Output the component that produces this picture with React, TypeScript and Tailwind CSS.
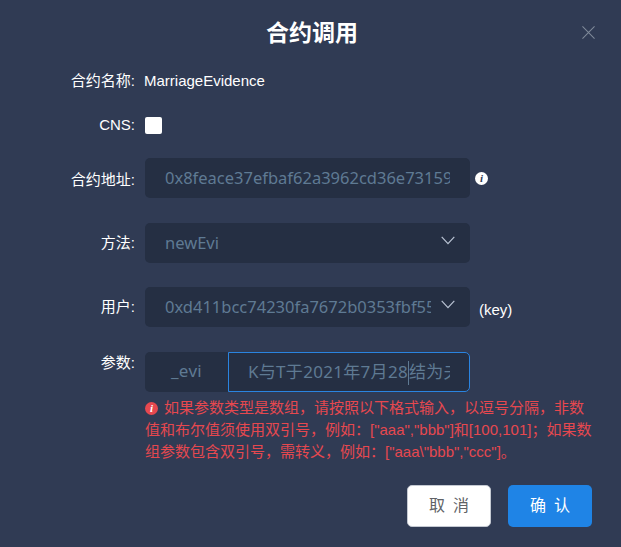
import React from 'react';

const CJK = 'font-["Liberation_Sans","Noto_Sans_CJK_SC",sans-serif]';
const FIELD = 'font-["Noto_Sans","Noto_Sans_CJK_SC",sans-serif]';

const Label: React.FC<{ text: string; className?: string }> = ({ text, className }) => (
  <div className={`w-[136px] shrink-0 pr-px text-right text-[15px] leading-5 text-white ${className ?? ''}`}>{text}</div>
);

const Chevron: React.FC = () => (
  <svg viewBox="0 0 14 9" className="absolute right-[15px] top-[13px] h-[9px] w-[14px]" fill="none" stroke="#b9c3d3" strokeWidth="1.2">
    <path d="M0.7 0.8 L7 7.6 L13.3 0.8" />
  </svg>
);

const InfoDot: React.FC<{ bg: string; fg: string; className: string }> = ({ bg, fg, className }) => (
  <span className={`h-[13px] w-[13px] shrink-0 items-center justify-center rounded-full font-["Liberation_Serif",serif] text-[11px] font-bold italic leading-none ${bg} ${fg} ${className}`}>
    i
  </span>
);

const Field: React.FC<{ text: string; select?: boolean }> = ({ text, select }) => (
  <div className={`relative h-10 w-[325px] rounded-[5px] bg-[#252f43] pl-5 text-[16.5px] leading-10 text-[#5f7a93] ${select ? 'pr-[39px]' : 'pr-5'} ${FIELD}`}>
    <div className="overflow-hidden whitespace-nowrap">{text}</div>
    {select && <Chevron />}
  </div>
);

export default function App() {
  return (
    <div className={`h-[547px] w-[621px] overflow-hidden bg-[#303b54] ${CJK}`}>
      <div className="relative pt-[19px]">
        <h2 className="pl-[3px] text-center text-[23px] font-bold leading-[28px] text-white">合约调用</h2>
        <svg viewBox="0 0 14 14" className="absolute right-[26px] top-[26px] h-[13px] w-[13px]" fill="none" stroke="#7f8a9a" strokeWidth="1.1">
          <path d="M0.5 0.5 L13.5 13.5 M13.5 0.5 L0.5 13.5" />
        </svg>
      </div>

      <div className="mt-[24px] flex h-5 items-center">
        <Label text="合约名称:" />
        <div className="ml-[8px] text-[15px] leading-5 text-white">MarriageEvidence</div>
      </div>

      <div className="mt-[24px] flex h-5 items-center">
        <Label text="CNS:" />
        <div className="ml-[9px] h-[17px] w-[17px] rounded-[2px] bg-white" />
      </div>

      <div className="mt-[23px] flex items-center">
        <Label text="合约地址:" className="mt-[4px]" />
        <div className="ml-[9px] flex items-center">
          <Field text="0x8feace37efbaf62a3962cd36e73159c7d64ee8a1" />
          <InfoDot bg="bg-white" fg="text-[#303b54]" className="ml-[5px] flex" />
        </div>
      </div>

      <div className="mt-[25px] flex items-center">
        <Label text="方法:" />
        <div className="ml-[9px]">
          <Field text="newEvi" select />
        </div>
      </div>

      <div className="mt-[24px] flex items-center">
        <Label text="用户:" />
        <div className="ml-[9px] flex items-center">
          <Field text="0xd411bcc74230fa7672b0353fbf55e8c1a07d9b34" select />
          <span className="ml-[9px] mt-[6px] text-[15px] leading-5 text-white">(key)</span>
        </div>
      </div>

      <div className="mt-[25px] flex items-start">
        <div className="pt-[1px]">
          <Label text="参数:" />
        </div>
        <div className="ml-[9px] w-[447px]">
          <div className={`flex h-10 w-[325px] text-[17px] leading-[38px] tracking-[0.3px] text-[#5f7a93] ${FIELD}`}>
            <div className="w-[83px] shrink-0 rounded-l-[5px] bg-[#252f43] text-center">_evi</div>
            <div className="min-w-0 flex-1 rounded-r-[5px] border border-[#2a84e0] bg-[#252f43] px-[19px]">
              <div className="overflow-hidden whitespace-nowrap">
                K与T于2021年7月28
                <span className="inline-block h-[24px] w-px bg-[#5f7a93] align-middle" />
                结为夫妻
              </div>
            </div>
          </div>
          <div className="mt-[5px] text-[15px] leading-[22px] text-[#e6484f]">
            <InfoDot bg="bg-[#e6484f]" fg="text-white" className="mr-[6px] inline-flex align-[1px]" />
            如果参数类型是数组，请按照以下格式输入，以逗号分隔，非数值和布尔值须使用双引号，例如：["aaa","bbb"]和[100,101]；如果数组参数包含双引号，需转义，例如：["aaa\"bbb","ccc"]。
          </div>
        </div>
      </div>

      <div className="mt-[22px] flex justify-end gap-[17px] pr-[29px]">
        <button className="h-[42px] w-[84px] rounded-[5px] border border-[#c4c9d2] bg-white pl-[8px] text-[16px] tracking-[8px] text-[#606266]">取消</button>
        <button className="h-[42px] w-[84px] rounded-[5px] bg-[#1f84e6] pl-[8px] text-[16px] tracking-[8px] text-white">确认</button>
      </div>
    </div>
  );
}
